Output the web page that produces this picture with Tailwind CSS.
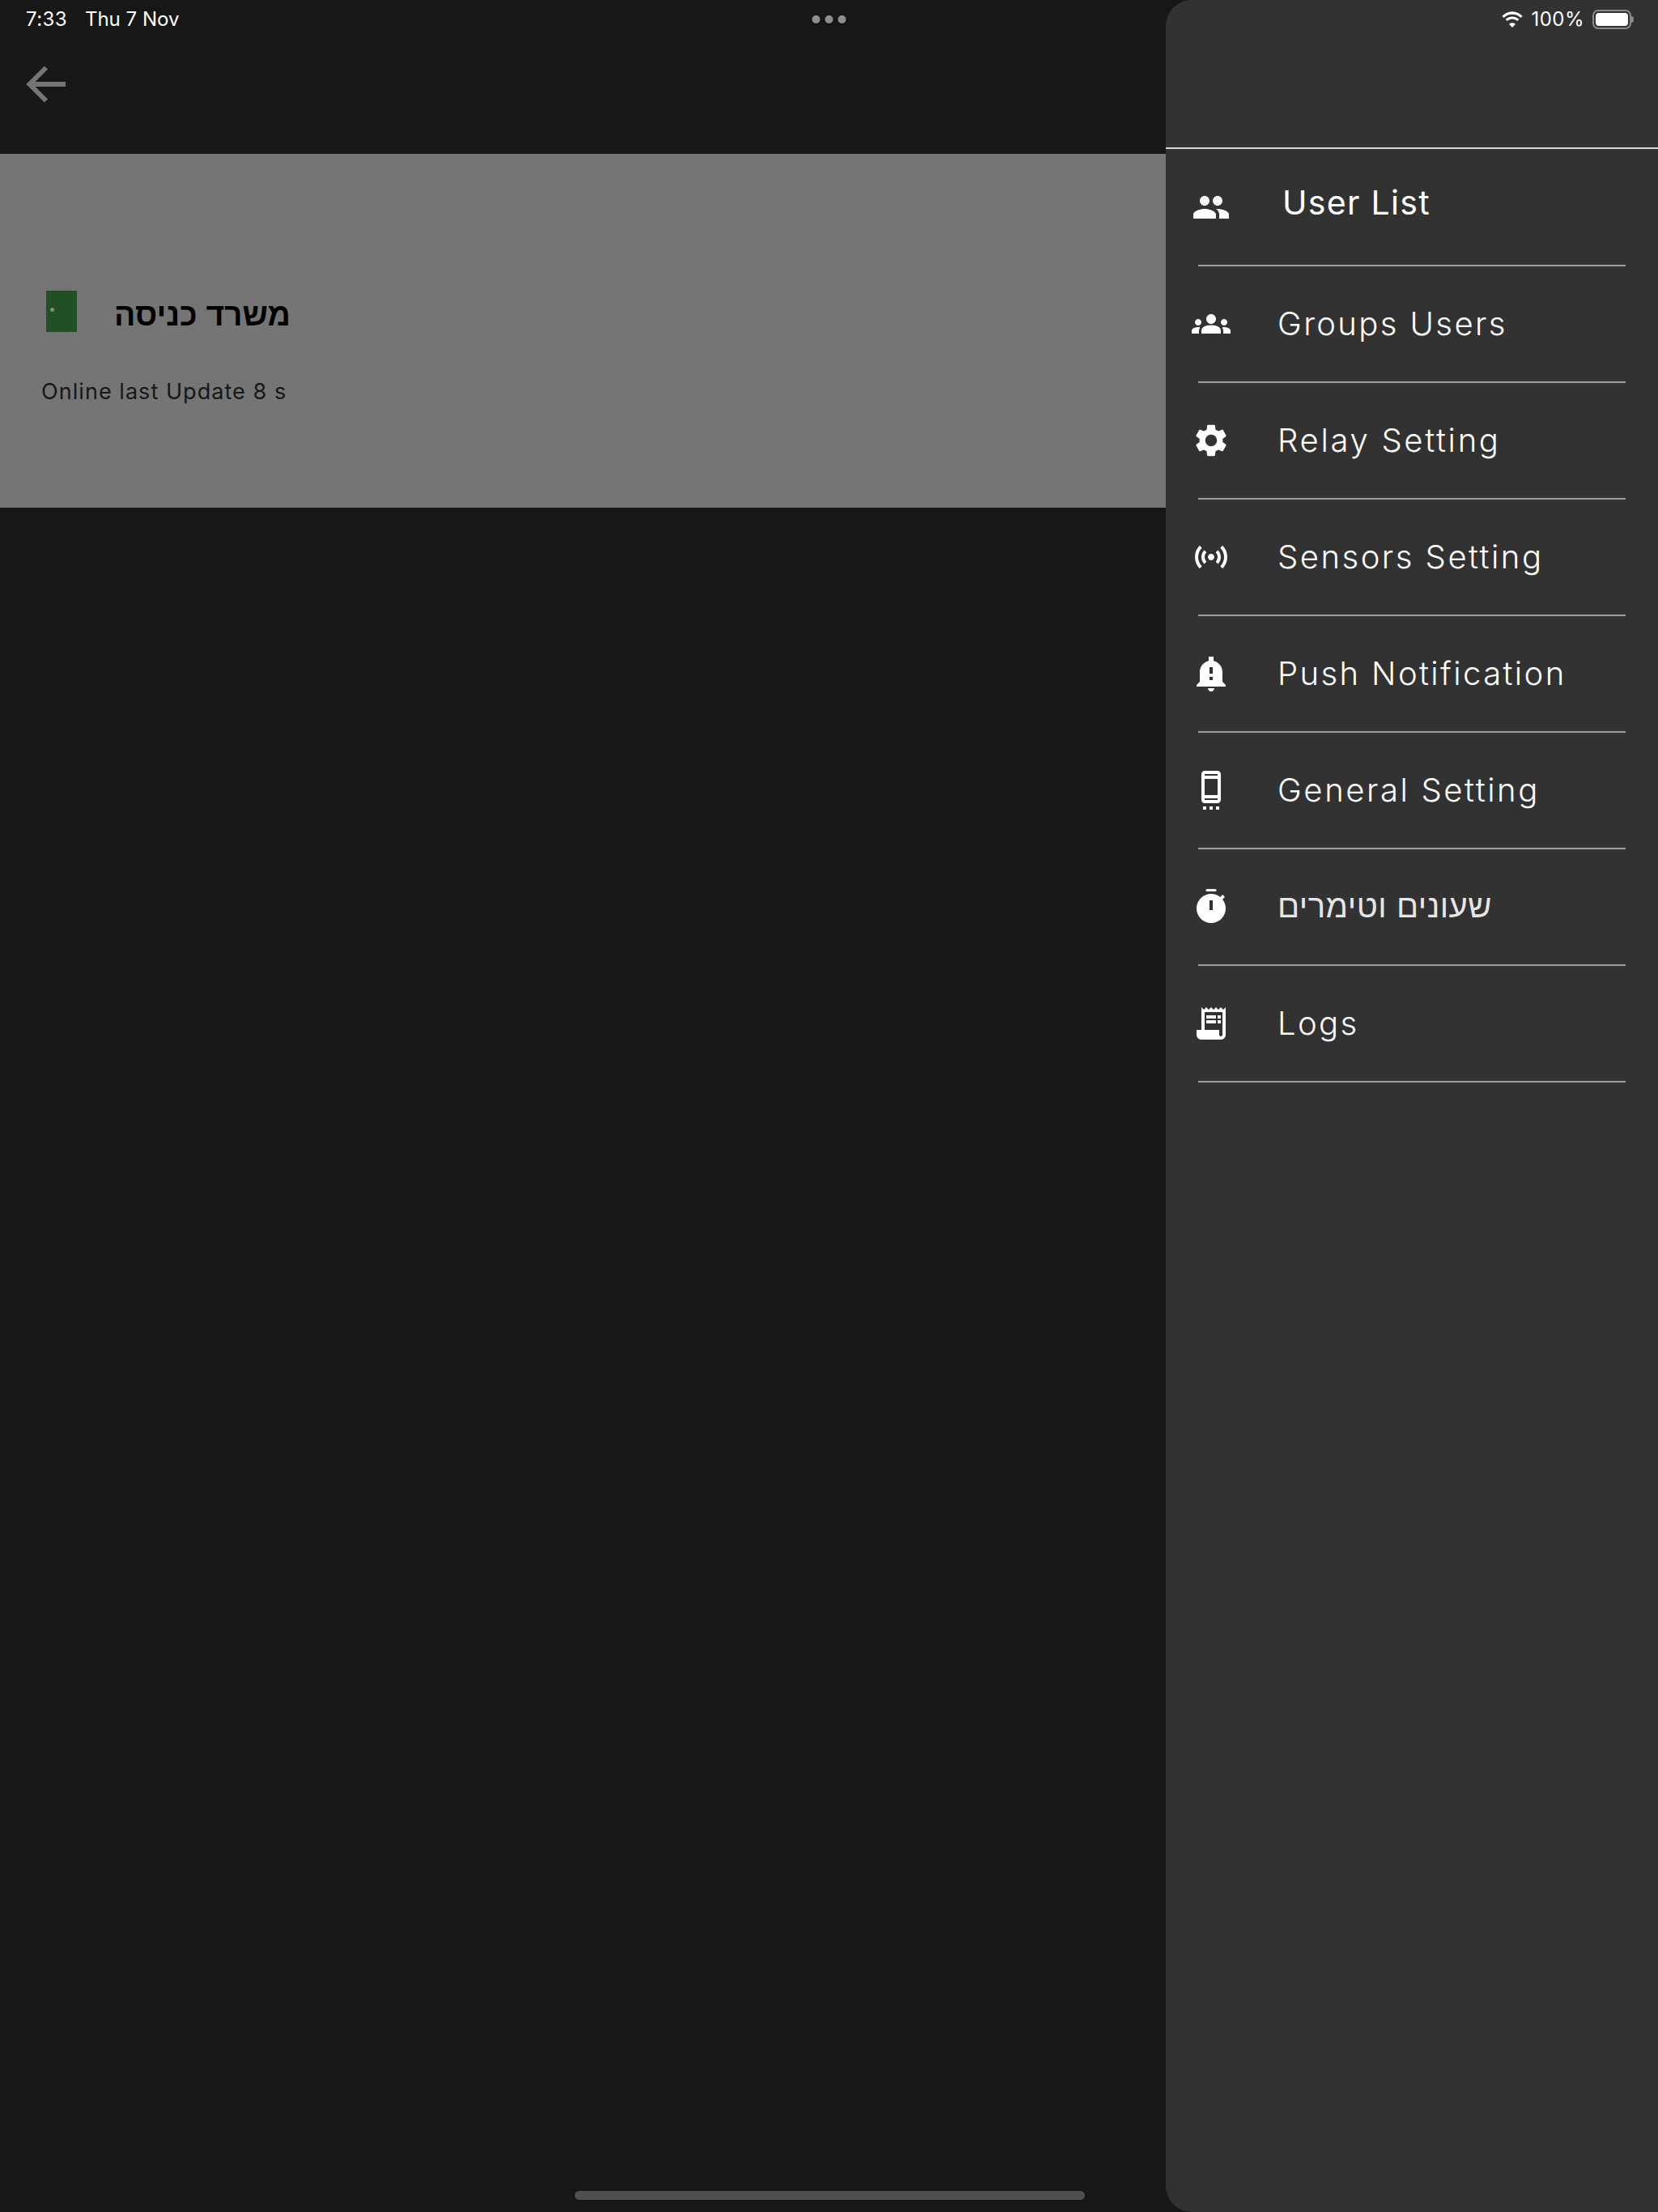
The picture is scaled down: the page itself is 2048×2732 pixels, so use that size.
<!DOCTYPE html>
<html lang="en">
<head>
  <meta charset="UTF-8" />
  <title>Relays</title>
  <script src="https://cdn.jsdelivr.net/npm/@tailwindcss/browser@4"></script>
</head>
<body class="bg-[#171717] font-['Inter','Liberation_Sans',sans-serif] text-white">
<div class="relative w-[2048px] h-[2732px] overflow-hidden">

  <!-- page behind the drawer -->
  <header class="h-[190px] pl-[30px] pt-[80px]">
    <svg class="block w-[54px] h-[50px]" viewBox="0 0 54 50" fill="none" stroke="#757575" stroke-width="6"><path d="M51 24H6M27 3.500 6.500 24 27 44.500"/></svg>
  </header>
  <section class="h-[437px] bg-[#757575] pl-[51px] pt-[169px]">
    <div class="flex items-center h-[51px] text-black">
      <div class="relative w-[38px] h-[51px] ml-[6px] bg-[#225025]">
        <span class="absolute left-[5px] top-[21px] w-[5px] h-[5px] rounded-full bg-[#8a8a8a]"></span>
      </div>
      <h2 dir="rtl" class="ml-[46px] mt-[7px] text-[39px] leading-[51px] font-bold font-['Liberation_Sans',sans-serif]">משרד כניסה</h2>
    </div>
    <p class="mt-[57px] text-[27px] leading-[34px] tracking-[1.050px] text-[#171717]">Online last Update 8 s</p>
  </section>

  <!-- drawer -->
  <aside class="absolute right-0 top-0 bottom-0 w-[608px] bg-[#323232] rounded-l-[32px]">
    <div class="h-[182px]"></div>
    <div class="h-[2px] bg-[#d9d1e0]"></div>

    <a class="flex items-center h-[143px] pl-[32px]">
      <svg class="w-[48px] h-[48px] fill-white" viewBox="0 0 24 24"><path d="M16 11c1.660 0 2.990-1.340 2.990-3S17.660 5 16 5c-1.660 0-3 1.340-3 3s1.340 3 3 3zm-8 0c1.660 0 2.990-1.340 2.990-3S9.660 5 8 5C6.340 5 5 6.340 5 8s1.340 3 3 3zm0 2c-2.330 0-7 1.170-7 3.500V19h14v-2.500c0-2.330-4.670-3.500-7-3.500zm8 0c-.290 0-.620.020-.970.050 1.160.840 1.970 1.970 1.970 3.450V19h6v-2.500c0-2.330-4.670-3.500-7-3.500z"/></svg>
      <span class="ml-[64px] mb-[10px] text-[41px] tracking-[1.300px]">User List</span>
    </a>
    <div class="h-[2px] ml-[40px] mr-[40px] bg-[#9e9e9e]"></div>

    <a class="flex items-center h-[142px] pl-[32px]">
      <svg class="w-[48px] h-[48px] fill-white" viewBox="0 0 24 24"><path d="M12 12.750c1.630 0 3.070.390 4.240.900 1.080.480 1.760 1.560 1.760 2.730V18H6v-1.610c0-1.180.680-2.260 1.760-2.730 1.170-.520 2.610-.910 4.240-.910zM4 13c1.100 0 2-.900 2-2s-.900-2-2-2-2 .900-2 2 .900 2 2 2zm1.130 1.100c-.370-.060-.740-.100-1.130-.100-.990 0-1.930.210-2.780.580C.480 14.900 0 15.620 0 16.430V18h4.500v-1.610c0-.830.230-1.610.630-2.290zM20 13c1.100 0 2-.900 2-2s-.900-2-2-2-2 .900-2 2 .900 2 2 2zm4 3.430c0-.810-.480-1.530-1.220-1.850-.850-.370-1.790-.580-2.780-.580-.390 0-.760.040-1.130.100.400.680.630 1.460.630 2.290V18H24v-1.570zM12 6c1.660 0 3 1.340 3 3s-1.340 3-3 3-3-1.340-3-3 1.340-3 3-3z"/></svg>
      <span class="ml-[58px] text-[40px] tracking-[2.400px] font-light">Groups Users</span>
    </a>
    <div class="h-[2px] ml-[40px] mr-[40px] bg-[#9e9e9e]"></div>

    <a class="flex items-center h-[142px] pl-[32px]">
      <svg class="w-[48px] h-[48px] fill-white" viewBox="0 0 24 24"><path d="M19.140 12.940c.040-.300.060-.610.060-.940 0-.320-.020-.640-.070-.940l2.030-1.580c.180-.140.230-.410.120-.610l-1.920-3.320c-.120-.220-.370-.290-.590-.220l-2.390.960c-.500-.380-1.030-.700-1.620-.940l-.360-2.540c-.040-.240-.240-.410-.480-.410h-3.840c-.240 0-.430.170-.470.410l-.360 2.540c-.590.240-1.130.570-1.620.940l-2.390-.960c-.220-.080-.470 0-.590.220L2.740 8.870c-.120.210-.080.470.120.610l2.030 1.580c-.050.300-.090.630-.090.940s.020.640.070.940l-2.030 1.580c-.180.140-.230.410-.120.610l1.920 3.320c.120.220.370.290.590.220l2.390-.960c.500.380 1.030.700 1.620.940l.360 2.540c.050.240.240.410.480.410h3.840c.240 0 .440-.170.470-.410l.360-2.540c.590-.240 1.130-.560 1.620-.940l2.390.960c.220.080.470 0 .590-.220l1.920-3.320c.120-.220.070-.470-.12-.61l-2.010-1.580zM12 15.600c-1.980 0-3.600-1.620-3.600-3.600s1.620-3.600 3.600-3.600 3.600 1.620 3.600 3.600-1.620 3.600-3.600 3.600z"/></svg>
      <span class="ml-[58px] text-[40px] tracking-[2.700px] font-light">Relay Setting</span>
    </a>
    <div class="h-[2px] ml-[40px] mr-[40px] bg-[#9e9e9e]"></div>

    <a class="flex items-center h-[142px] pl-[32px]">
      <svg class="w-[48px] h-[48px] fill-white" viewBox="0 0 24 24"><path d="M7.760 16.240C6.670 15.160 6 13.660 6 12s.670-3.160 1.760-4.240l1.420 1.420C8.450 9.900 8 10.900 8 12c0 1.100.450 2.100 1.170 2.830l-1.410 1.410zm8.480 0C17.330 15.160 18 13.660 18 12s-.670-3.160-1.760-4.240l-1.420 1.420C15.550 9.900 16 10.900 16 12c0 1.100-.450 2.100-1.170 2.830l1.410 1.410zM12 10c-1.100 0-2 .900-2 2s.900 2 2 2 2-.900 2-2-.900-2-2-2zm8 2c0 2.210-.900 4.210-2.350 5.650l1.420 1.420C20.880 17.260 22 14.760 22 12s-1.120-5.260-2.930-7.070l-1.420 1.420C19.100 7.790 20 9.790 20 12zM6.350 6.350L4.930 4.930C3.120 6.740 2 9.240 2 12s1.120 5.260 2.930 7.070l1.420-1.420C4.900 16.210 4 14.210 4 12s.900-4.210 2.350-5.650z"/></svg>
      <span class="ml-[58px] text-[40px] tracking-[2.500px] font-light">Sensors Setting</span>
    </a>
    <div class="h-[2px] ml-[40px] mr-[40px] bg-[#9e9e9e]"></div>

    <a class="flex items-center h-[142px] pl-[32px]">
      <svg class="w-[48px] h-[48px] fill-white" viewBox="0 0 24 24"><path d="M12 23c1.100 0 2-.900 2-2h-4c0 1.100.900 2 2 2zm7-6v-6c0-3.350-2.360-6.150-5.500-6.830V1.500h-3v2.670C7.360 4.850 5 7.650 5 11v6l-2 2v1h18v-1l-2-2zm-6-1h-2v-2h2v2zm0-4h-2V8h2v4z"/></svg>
      <span class="ml-[58px] text-[40px] tracking-[2.400px] font-light">Push Notification</span>
    </a>
    <div class="h-[2px] ml-[40px] mr-[40px] bg-[#9e9e9e]"></div>

    <a class="flex items-center h-[142px] pl-[32px]">
      <svg class="w-[48px] h-[48px] fill-white" viewBox="0 0 24 24"><path d="M7 22h2v2H7zm4 0h2v2h-2zm4 0h2v2h-2zM16 .010 8 0C6.900 0 6 .900 6 2v16c0 1.100.900 2 2 2h8c1.100 0 2-.900 2-2V2c0-1.100-.900-1.990-2-1.990zM16 18H8v-1h8v1zm0-3H8V5h8v10zm0-12H8V2h8v1z"/></svg>
      <span class="ml-[58px] text-[40px] tracking-[2.600px] font-light">General Setting</span>
    </a>
    <div class="h-[2px] ml-[40px] mr-[40px] bg-[#9e9e9e]"></div>

    <a class="flex items-center h-[142px] pl-[32px]">
      <svg class="w-[48px] h-[48px] fill-white" viewBox="0 0 24 24"><path d="M9.500 1h5a.750.750 0 0 1 0 1.500h-5a.750.750 0 0 1 0-1.500zm9.530 6.390l1.420-1.420c-.430-.510-.900-.990-1.410-1.410l-1.420 1.420C16.070 4.740 14.120 4 12 4c-4.970 0-9 4.030-9 9s4.020 9 9 9 9-4.030 9-9c0-2.120-.740-4.070-1.970-5.610zM13 14h-2V8h2v6z"/></svg>
      <span dir="rtl" class="ml-[58px] mb-[2px] text-[40px] tracking-[.5px] font-light text-[#e6e6e6]">שעונים וטימרים</span>
    </a>
    <div class="h-[2px] ml-[40px] mr-[40px] bg-[#9e9e9e]"></div>

    <a class="flex items-center h-[142px] pl-[32px]">
      <svg class="w-[48px] h-[48px] fill-white" viewBox="0 0 24 24"><path fill-rule="evenodd" d="M19.500 3.500 18 2l-1.500 1.500L15 2l-1.500 1.500L12 2l-1.500 1.500L9 2 7.500 3.500 6 2v14H3v3c0 1.660 1.340 3 3 3h12c1.660 0 3-1.340 3-3V2l-1.500 1.500zM19 19c0 .550-.450 1-1 1s-1-.450-1-1v-3H8V5h11v14z"/><path d="M9 7h6v2H9zm7 0h2v2h-2zM9 10h6v2H9zm7 0h2v2h-2z"/></svg>
      <span class="ml-[58px] text-[40px] tracking-[2.400px] font-light">Logs</span>
    </a>
    <div class="h-[2px] ml-[40px] mr-[40px] bg-[#9e9e9e]"></div>
  </aside>

  <!-- iPad status bar, sits over page and drawer -->
  <div class="absolute left-0 right-0 top-0 h-[48px] flex items-center justify-between pl-[32px] pr-[30px] text-[24px]">
    <div class="flex gap-[22px]"><span class="tracking-[.4px]">7:33</span><span>Thu 7 Nov</span></div>
    <div class="absolute left-[1003px] top-[19px] flex gap-[6px]">
      <span class="w-[10px] h-[10px] rounded-full bg-[#8e8e8e]"></span>
      <span class="w-[10px] h-[10px] rounded-full bg-[#8e8e8e]"></span>
      <span class="w-[10px] h-[10px] rounded-full bg-[#8e8e8e]"></span>
    </div>
    <div class="flex items-center gap-[8px]">
      <svg class="w-[30px] h-[22px] fill-white" viewBox="0 0 28 21"><path d="M14 4.500c3.900 0 7.400 1.500 10 4l2-2.100C22.800 3.300 18.600 1.300 14 1.300S5.200 3.300 2 6.400l2 2.100c2.600-2.500 6.100-4 10-4z"/><path d="M14 10c2.300 0 4.400.900 6 2.400l2-2.100c-2.100-2-4.900-3.200-8-3.200s-5.900 1.200-8 3.200l2 2.100c1.600-1.500 3.700-2.400 6-2.400z"/><path d="M14 14.500c-1.500 0-2.900.600-3.900 1.500l3.900 4 3.900-4c-1-.900-2.400-1.500-3.900-1.500z"/></svg>
      <span class="tracking-[.5px]">100%</span>
      <div class="flex items-center ml-[2px]">
        <div class="w-[48px] h-[24px] rounded-[7px] border-2 border-[#8a8a8a] p-[2px]"><div class="w-full h-full rounded-[4px] bg-white"></div></div>
        <div class="w-[3px] h-[8px] rounded-r-full bg-[#8a8a8a]"></div>
      </div>
    </div>
  </div>

  <!-- home indicator -->
  <div class="absolute left-[710px] top-[2706px] w-[630px] h-[11px] rounded-full bg-[#4f4f4f]"></div>
</div>
</body>
</html>
